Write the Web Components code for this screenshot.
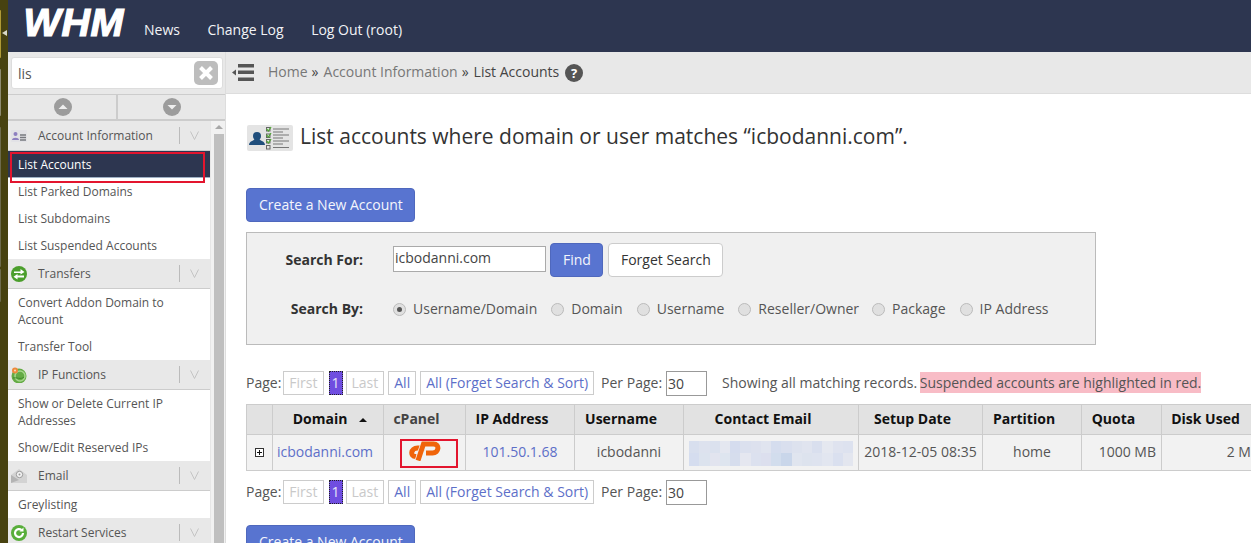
<!DOCTYPE html>
<html>
<head>
<meta charset="utf-8">
<title>List Accounts</title>
<style>
  html, body { margin: 0; height: 543px; overflow: hidden; background: #fff; }
  body { font: 14px "Open Sans", "Liberation Sans", sans-serif; color: #333; }
</style>
</head>
<body>
<whm-app></whm-app>

<script>
const SHARED = `
  *, *::before, *::after { box-sizing: border-box; }
  a { color: inherit; text-decoration: none; }
`;

class WhmApp extends HTMLElement {
  constructor() {
    super();
    this.attachShadow({ mode: "open" });
    this.shadowRoot.innerHTML = `
    <style>
      ${SHARED}
      :host { display: flex; width: 1251px; height: 543px; overflow: hidden; }
      .col { flex: 1; min-width: 0; display: flex; flex-direction: column; }
      .row { flex: 1; min-height: 0; display: flex; }
    </style>
    <desk-strip></desk-strip>
    <div class="col">
      <whm-topbar></whm-topbar>
      <div class="row">
        <whm-sidebar></whm-sidebar>
        <whm-main></whm-main>
      </div>
    </div>`;
  }
}

class DeskStrip extends HTMLElement {
  constructor() {
    super();
    this.attachShadow({ mode: "open" });
    this.shadowRoot.innerHTML = `
    <style>
      ${SHARED}
      :host { display: flex; flex-direction: column; width: 8px; height: 543px; background: #474210; position: relative; }
      i { display: block; width: 1px; margin-left: 0; border-radius: 0 1px 1px 0; }
      .a { height: 48px; margin-top: 10px; background: #b09a35; }
      .b { height: 47px; margin-top: 11px; background: #8d8a70; }
      .c { height: 140px; margin-top: 11px; background: #6d6a4c; }
      .d { height: 33px; margin-top: 2px; background: #6d6a4c; }
      b { position: absolute; left: 2px; top: 30px; width: 0; height: 7px; border: 3.5px solid transparent; border-left: 0; border-right: 5px solid #d9d9c9; box-sizing: content-box; height: 0; }
    </style>
    <i class="a"></i><i class="b"></i><i class="c"></i><i class="d"></i><b></b>`;
  }
}

class WhmTopbar extends HTMLElement {
  constructor() {
    super();
    this.attachShadow({ mode: "open" });
    this.shadowRoot.innerHTML = `
    <style>
      ${SHARED}
      :host { display: flex; align-items: center; height: 52px; background: #2d3650; color: #f2f3f6; flex: none; }
      .logo { width: 136px; padding-left: 15px; font: italic 700 38px/44px "Liberation Sans", sans-serif; color: #fff; -webkit-text-stroke: 1.2px #fff; letter-spacing: .5px; margin-top: -6px; transform: scaleX(1.04); transform-origin: left; }
      nav { display: flex; gap: 27.5px; margin-top: 6px; }
    </style>
    <div class="logo">WHM</div>
    <nav><a>News</a><a>Change Log</a><a>Log Out (root)</a></nav>`;
  }
}

class WhmSidebar extends HTMLElement {
  constructor() {
    super();
    this.attachShadow({ mode: "open" });
    this.shadowRoot.innerHTML = `
    <style>
      ${SHARED}
      :host { display: flex; flex-direction: column; width: 218px; flex: none; border-right: 1px solid #ddd; background: #fff; overflow: hidden; }
      .search { height: 42px; background: #e8e8e8; flex: none; padding: 5px 2px 5px 3px; }
      .box { display: flex; align-items: center; justify-content: space-between; height: 32px; background: #fff; border: 1px solid #ddd; border-radius: 3px; padding: 0 4px 0 6px; color: #555; }
      .clear { width: 24px; height: 24px; border-radius: 5px; background: #bdbdbd; display: grid; place-items: center; }
      .arrows { display: flex; height: 27px; flex: none; background: #e8e8e8; border-top: 1px solid #ccc; border-bottom: 2px solid #ccc; }
      .arrows div { flex: 1; display: grid; place-items: center; padding-left: 2px; }
      .arrows div + div { border-left: 2px solid #ccc; flex: 0 0 109px; padding-left: 0; }
      .body { flex: 1; min-height: 0; display: flex; }
      .list { width: 202px; flex: none; }
      .scroll { flex: 1; background: #f1f1f1; padding: 4px 1px 0 3px; display: flex; flex-direction: column; align-items: center; gap: 5px; border-left: 1px solid #e6e6e6; }
      .scroll i { display: block; width: 0; height: 0; border: 4px solid transparent; border-top: 0; border-bottom: 4px solid #a8a8a8; }
      .scroll b { display: block; flex: 1; width: 100%; background: #bfbfbf; }
    </style>
    <div class="search">
      <div class="box"><span>lis</span>
        <span class="clear"><svg width="14" height="14" viewBox="0 0 14 14"><path d="M1.500 1.500l11 11M12.500 1.500l-11 11" stroke="#fff" stroke-width="4"/></svg></span>
      </div>
    </div>
    <div class="arrows">
      <div><svg width="18" height="18" viewBox="0 0 18 18"><circle cx="9" cy="9" r="9" fill="#9c9c9c"/><path d="M4.500 11L9 6.500l4.500 4.500z" fill="#eee"/></svg></div>
      <div><svg width="18" height="18" viewBox="0 0 18 18"><circle cx="9" cy="9" r="9" fill="#9c9c9c"/><path d="M4.500 7L9 11.500 13.500 7z" fill="#eee"/></svg></div>
    </div>
    <div class="body">
      <div class="list">
        <nav-group label="Account Information" icon="account">
          <nav-item active>List Accounts</nav-item>
          <nav-item>List Parked Domains</nav-item>
          <nav-item>List Subdomains</nav-item>
          <nav-item>List Suspended Accounts</nav-item>
        </nav-group>
        <nav-group label="Transfers" icon="transfers">
          <nav-item>Convert Addon Domain to Account</nav-item>
          <nav-item>Transfer Tool</nav-item>
        </nav-group>
        <nav-group label="IP Functions" icon="ip">
          <nav-item>Show or Delete Current IP Addresses</nav-item>
          <nav-item>Show/Edit Reserved IPs</nav-item>
        </nav-group>
        <nav-group label="Email" icon="email">
          <nav-item>Greylisting</nav-item>
        </nav-group>
        <nav-group label="Restart Services" icon="restart"></nav-group>
      </div>
      <div class="scroll"><i></i><b></b></div>
    </div>`;
  }
}

const GROUP_ICONS = {
  account: `<rect width="16" height="12" y="2" fill="#e2e2e6" rx="1"/><circle cx="4.500" cy="6" r="2" fill="#8d7fc0"/><path d="M1 12c0-3 7-3 7 0z" fill="#8d7fc0"/><path d="M9 7h6M9 9.500h6M9 12h6" stroke="#77797f" stroke-width="1.500"/>`,
  transfers: `<circle cx="8" cy="8" r="8" fill="#4b9e2c"/><path d="M3 5.500h6.500V3L13.500 6 9.500 8.500V7H3zM13 9.500H6.500V8L2.500 10.700 6.500 13.500V11.500H13z" fill="#fff"/>`,
  ip: `<circle cx="8" cy="9" r="7.500" fill="#64ab45"/><circle cx="9" cy="9" r="5" fill="none" stroke="#a6d68d" stroke-width="1.500"/><path d="M2 11c3-1 8 2 11-1" stroke="#3f8a2a" fill="none"/><circle cx="4" cy="3.500" r="3" fill="#ee8a3c"/><circle cx="4" cy="3.500" r="1" fill="#f8dcc0"/>`,
  email: `<path d="M0 7L8 1l8 6v8H0z" fill="#d3d3d3"/><path d="M0 15V7l8 5z" fill="#b4b4b4"/><circle cx="8.500" cy="6.500" r="3.200" fill="#f4f4f4" stroke="#9a9a9a"/><circle cx="8.500" cy="6.500" r="1" fill="#9a9a9a"/>`,
  restart: `<circle cx="8" cy="8" r="8" fill="#58ae3a"/><path d="M12 8a4 4 0 1 1-1.400-3" fill="none" stroke="#fff" stroke-width="2.200"/><path d="M12.500 2.500v4h-4z" fill="#fff"/>`
};

class NavGroup extends HTMLElement {
  connectedCallback() {
    if (this.shadowRoot) return;
    this.attachShadow({ mode: "open" });
    this.shadowRoot.innerHTML = `
    <style>
      ${SHARED}
      :host { display: block; }
      header { display: flex; align-items: center; height: 30px; padding-left: 3px; background: #e8e8e8; border-bottom: 1px solid #ccc; font-size: 12px; color: #555; }
      svg.ic { width: 16px; height: 16px; flex: none; margin-right: 11px; }
      span { flex: 1; }
      .sep { flex: none; width: 1px; height: 17px; background: #bbb; margin-right: 10px; }
      svg.v { flex: none; margin-right: 11px; }
    </style>
    <header>
      <svg class="ic" viewBox="0 0 16 16">${GROUP_ICONS[this.getAttribute("icon")]}</svg>
      <span>${this.getAttribute("label")}</span>
      <i class="sep"></i>
      <svg class="v" width="9" height="9" viewBox="0 0 9 9"><path d="M.5 .5L4.500 8.500 8.500 .5" fill="none" stroke="#c4c4c4"/></svg>
    </header>
    <slot></slot>`;
  }
}

class NavItem extends HTMLElement {
  constructor() {
    super();
    this.attachShadow({ mode: "open" });
    this.shadowRoot.innerHTML = `
    <style>
      ${SHARED}
      :host { display: block; position: relative; padding: 5px 10px; font-size: 12px; line-height: 17px; color: #555; background: #fff; }
      :host([active]) { z-index: 1; background: #2d3650; color: #fff; box-shadow: inset 0 -1px 0 #9fb0c4; }
      :host([active])::after { content: ""; position: absolute; left: 2px; top: 1px; width: 195px; height: 31px; border: 2px solid #e3152e; }
    </style>
    <slot></slot>`;
  }
}

class WhmMain extends HTMLElement {
  constructor() {
    super();
    this.attachShadow({ mode: "open" });
    this.shadowRoot.innerHTML = `
    <style>
      ${SHARED}
      :host { display: flex; flex-direction: column; flex: 1; min-width: 0; overflow: hidden; background: #fff; }
      .crumbs { flex: none; height: 42px; display: flex; align-items: center; background: #e8e8e8; border-bottom: 1px solid #ddd; padding: 0 0 2px 6px; color: #777; }
      .crumbs svg.menu { margin-right: 14px; margin-top: 2px; }
      .crumbs em { font-style: normal; color: #444; margin: 0 5px 0 4px; }
      .crumbs strong { font-weight: 400; color: #444; }
      .crumbs svg.help { margin: 2px 0 0 6px; }
      .page { flex: 1; min-height: 0; padding: 31px 0 0 20px; }
      h1 { display: flex; align-items: center; gap: 7px; margin: 0 0 37px; height: 26px; font-size: 21px; font-weight: 400; color: #333; white-space: nowrap; }
      h1 span { margin-top: -4px; }
      .panel { margin-top: 10px; }
      pager-row { margin-top: 26px; }
      pager-row + accounts-table { margin-top: 8px; }
      accounts-table + pager-row { margin-top: 9px; }
      .second { margin-top: 20px; }
      mark { background: #f8bcc6; color: #555; padding: 1px 0; margin-left: -1px; letter-spacing: -.01px; }
      .status { display: block; margin-left: 15px; color: #555; white-space: nowrap; }
    </style>
    <div class="crumbs">
      <svg class="menu" width="22" height="17" viewBox="0 0 22 17"><path d="M6 0h16v3.500H6zM6 6.500h16V10H6zM6 13.500h16V17H6z" fill="#555"/><path d="M4 5.500v6L0 8.500z" fill="#555"/></svg>
      <a>Home</a><em>»</em><a>Account Information</a><em>»</em><strong>List Accounts</strong>
      <svg class="help" width="18" height="18" viewBox="0 0 18 18"><circle cx="9" cy="9" r="9" fill="#555"/><text x="9" y="13.500" text-anchor="middle" font-family="Open Sans" font-weight="700" font-size="13" fill="#fff">?</text></svg>
    </div>
    <div class="page">
      <h1>
        <svg width="46" height="26" viewBox="0 0 46 26" style="margin-left:1px;flex:none">
          <rect width="46" height="26" rx="2" fill="#e4e4e4"/>
          <circle cx="10" cy="11" r="4" fill="#1f4e7c"/>
          <path d="M2 20c0-4 5-4 5.500-6h5c.5 2 5.500 2 5.500 6z" fill="#1f4e7c"/>
          <g fill="none" stroke="#666"><rect x="19.500" y="2.500" width="3.500" height="3.500"/><rect x="19.500" y="9" width="3.500" height="3.500"/><rect x="19.500" y="14.500" width="3.500" height="3.500"/><rect x="19.500" y="20.500" width="3.500" height="3.500"/></g>
          <g fill="none" stroke="#55a63a" stroke-width="1.300"><path d="M19.500 4l2 2 2.500-4M19.500 10l2 2 2.500-4M19.500 16l2 2 2.500-4"/></g>
          <g stroke="#777" stroke-width="1.200"><path d="M26 4h16M26 7h10M26 10h16M26 13h10M26 16h16M26 19h10M26 22.500h16"/></g>
        </svg>
        <span>List accounts where domain or user matches “icbodanni.com”.</span>
      </h1>
      <blue-btn>Create a New Account</blue-btn>
      <search-panel class="panel"></search-panel>
      <pager-row><span class="status">Showing all matching records. <mark>Suspended accounts are highlighted in red.</mark></span></pager-row>
      <accounts-table></accounts-table>
      <pager-row></pager-row>
      <blue-btn class="second">Create a New Account</blue-btn>
    </div>`;
  }
}

class BlueBtn extends HTMLElement {
  constructor() {
    super();
    this.attachShadow({ mode: "open" });
    this.shadowRoot.innerHTML = `
    <style>
      ${SHARED}
      :host { display: flex; align-items: center; width: fit-content; height: 34px; padding: 0 11.5px 2px 12px; background: #5874d0; border: 1px solid #4f68bd; border-radius: 4px; color: #f4f6fc; }
      :host([plain]) { background: #fff; border-color: #ccc; color: #333; }
    </style>
    <slot></slot>`;
  }
}

class SearchPanel extends HTMLElement {
  constructor() {
    super();
    this.attachShadow({ mode: "open" });
    const opts = ["Username/Domain", "Domain", "Username", "Reseller/Owner", "Package", "IP Address"];
    this.shadowRoot.innerHTML = `
    <style>
      ${SHARED}
      :host { display: block; width: 850px; height: 113px; background: #f0f0f0; border: 1px solid #bbb; padding: 10px 0 0 0; }
      .grid { display: grid; grid-template-columns: 116px 1fr; grid-auto-rows: 34px; column-gap: 30px; row-gap: 15px; }
      label { font-weight: 700; display: flex; align-items: center; justify-content: flex-end; color: #333; padding-bottom: 2px; }
      .line { display: flex; align-items: center; }
      .input { width: 153px; height: 26px; margin-right: 4px; margin-top: -3px; background: #fff; border: 1px solid #aaa; padding-left: 1px; line-height: 22px; color: #444; }
      blue-btn + blue-btn { margin-left: 4.5px; }
      .opts { padding-bottom: 2px; }
      .opt { display: flex; align-items: center; margin-right: 14px; color: #555; }
      .opt:nth-child(4) { margin-right: 13px; }
      .opt i { width: 13px; height: 13px; margin: 2px 7px 0 0; border-radius: 50%; border: 1px solid #bbb; background: #e0e0e0; display: grid; place-items: center; }
      .opt.on i::after { content: ""; width: 5px; height: 5px; border-radius: 50%; background: #555; }
    </style>
    <div class="grid">
      <label>Search For:</label>
      <div class="line"><div class="input">icbodanni.com</div><blue-btn>Find</blue-btn><blue-btn plain>Forget Search</blue-btn></div>
      <label>Search By:</label>
      <div class="line opts">${opts.map((o, i) => `<span class="opt${i ? "" : " on"}"><i></i>${o}</span>`).join("")}</div>
    </div>`;
  }
}

class PagerRow extends HTMLElement {
  constructor() {
    super();
    this.attachShadow({ mode: "open" });
    this.shadowRoot.innerHTML = `
    <style>
      ${SHARED}
      :host { display: flex; align-items: flex-start; height: 25px; line-height: 23px; color: #555; white-space: nowrap; }
      a { display: block; height: 24px; line-height: 21px; padding: 0 5px; border: 1px solid #ccc; margin-right: 4px; color: #5d6fc8; }
      a.off { color: #c9c9c9; }
      a.cur { padding: 0 2px; margin: 0 3px 0 1px; background: #6f4de0; color: #e8e4fa; border: 1px dotted #222; }
      .first { margin-left: 2px; }
      .per { margin: 0 4px 0 3px; }
      .input { width: 41px; height: 25px; border: 1px solid #999; padding-left: 1px; line-height: 23px; color: #444; }
    </style>
    Page: <a class="off first">First</a><a class="cur">1</a><a class="off">Last</a><a>All</a><a>All (Forget Search &amp; Sort)</a>
    <span class="per">Per Page:</span><div class="input">30</div><slot></slot>`;
  }
}

class AccountsTable extends HTMLElement {
  constructor() {
    super();
    this.attachShadow({ mode: "open" });
    const widths = [26, 111, 82, 109, 109, 175, 124, 99, 80, 104];
    this.shadowRoot.innerHTML = `
    <style>
      ${SHARED}
      :host { display: block; width: 1019px; }
      table { table-layout: fixed; width: 1019px; border-collapse: collapse; white-space: nowrap; }
      th, td { border: 1px solid #ccc; padding: 0 0 2px; text-align: center; }
      th { position: relative; height: 30px; padding-right: 16px; background: #e2e2e2; font-weight: 700; color: #111; }
      th.soft { color: #444; }
      td { height: 36px; background: #f2f2f2; color: #555; }
      td.flush { padding: 0; }
      td.dom { padding-right: 6px; }
      a { color: #5d6fc8; }
      .sort { position: absolute; right: 16px; top: 13px; width: 8px; height: 4px; border: 4px solid transparent; border-top: 0; border-bottom: 4px solid #111; }
      .plus { display: block; margin: 0 auto; }
      .cp { display: block; margin: 2px auto 0 16px; width: 58px; height: 29px; border: 2px solid #e3152e; padding: 0 0 0 7px; }
      .right { text-align: right; padding-right: 5px; }
    </style>
    <table>
      <colgroup>${widths.map(w => `<col style="width:${w}px">`).join("")}</colgroup>
      <tr><th></th><th>Domain<i class="sort"></i></th><th class="soft">cPanel</th><th>IP Address</th><th>Username</th><th>Contact Email</th><th>Setup Date</th><th>Partition</th><th>Quota</th><th>Disk Used</th></tr>
      <tr>
        <td class="flush"><svg class="plus" width="9" height="9" viewBox="0 0 9 9"><rect x=".5" y=".5" width="8" height="8" fill="#fff" stroke="#333"/><path d="M2 4.500h5M4.500 2v5" stroke="#111"/></svg></td>
        <td class="dom"><a>icbodanni.com</a></td>
        <td class="flush"><div class="cp"><svg width="32" height="20" viewBox="0 0 32 20" style="display:block"><g fill="none" stroke-width="5"><path d="M16 7H8.500C1.500 7 1 15.500 6.500 15.500H7.500" stroke="#f0640a"/><path d="M9 19.500L14.500 3H24.500C31 3 30 12 23.500 12H17" stroke="#f2f2f2" stroke-width="6.500"/><path d="M9 19.500L14.500 3H24.500C31 3 30 12 23.500 12H17" stroke="#f0640a"/></g></svg></div></td>
        <td><a>101.50.1.68</a></td>
        <td>icbodanni</td>
        <td class="flush"><blur-strip></blur-strip></td>
        <td>2018-12-05 08:35</td>
        <td>home</td>
        <td class="right">1000 MB</td>
        <td class="right">2 MB</td>
      </tr>
    </table>`;
  }
}

class BlurStrip extends HTMLElement {
  constructor() {
    super();
    this.attachShadow({ mode: "open" });
    const cells = [
      "#d8dfee", "#dde2ee", "#dbe1ee", "#e4e7f0", "#d5dcee", "#dbe0ee", "#dde1ee", "#e0e4ef", "#d5ddee", "#d9dfee", "#dde2ee", "#e0e4ef", "#d9dfee", "#e5e8f0", "#dfe3ef", "#dde2ef",
      "#d5ddef", "#dce3ee", "#e2e4ef", "#dee5ef", "#d6dded", "#e5e7f0", "#dce1ef", "#dcdfee", "#d2dded", "#c9d6ea", "#e0e5ef", "#dde3ee", "#dee3ef", "#e2e6f0", "#dae0ef", "#e3e6ef"
    ];
    this.shadowRoot.innerHTML = `
    <style>
      :host { display: grid; grid-template-columns: repeat(16, 1fr); grid-auto-rows: 12.5px; width: 164px; margin: 1px 0 0 5px; }
    </style>
    ${cells.map(c => `<i style="background:${c}"></i>`).join("")}`;
  }
}

customElements.define("desk-strip", DeskStrip);
customElements.define("whm-topbar", WhmTopbar);
customElements.define("nav-item", NavItem);
customElements.define("nav-group", NavGroup);
customElements.define("whm-sidebar", WhmSidebar);
customElements.define("blue-btn", BlueBtn);
customElements.define("search-panel", SearchPanel);
customElements.define("pager-row", PagerRow);
customElements.define("blur-strip", BlurStrip);
customElements.define("accounts-table", AccountsTable);
customElements.define("whm-main", WhmMain);
customElements.define("whm-app", WhmApp);
</script>
</body>
</html>
